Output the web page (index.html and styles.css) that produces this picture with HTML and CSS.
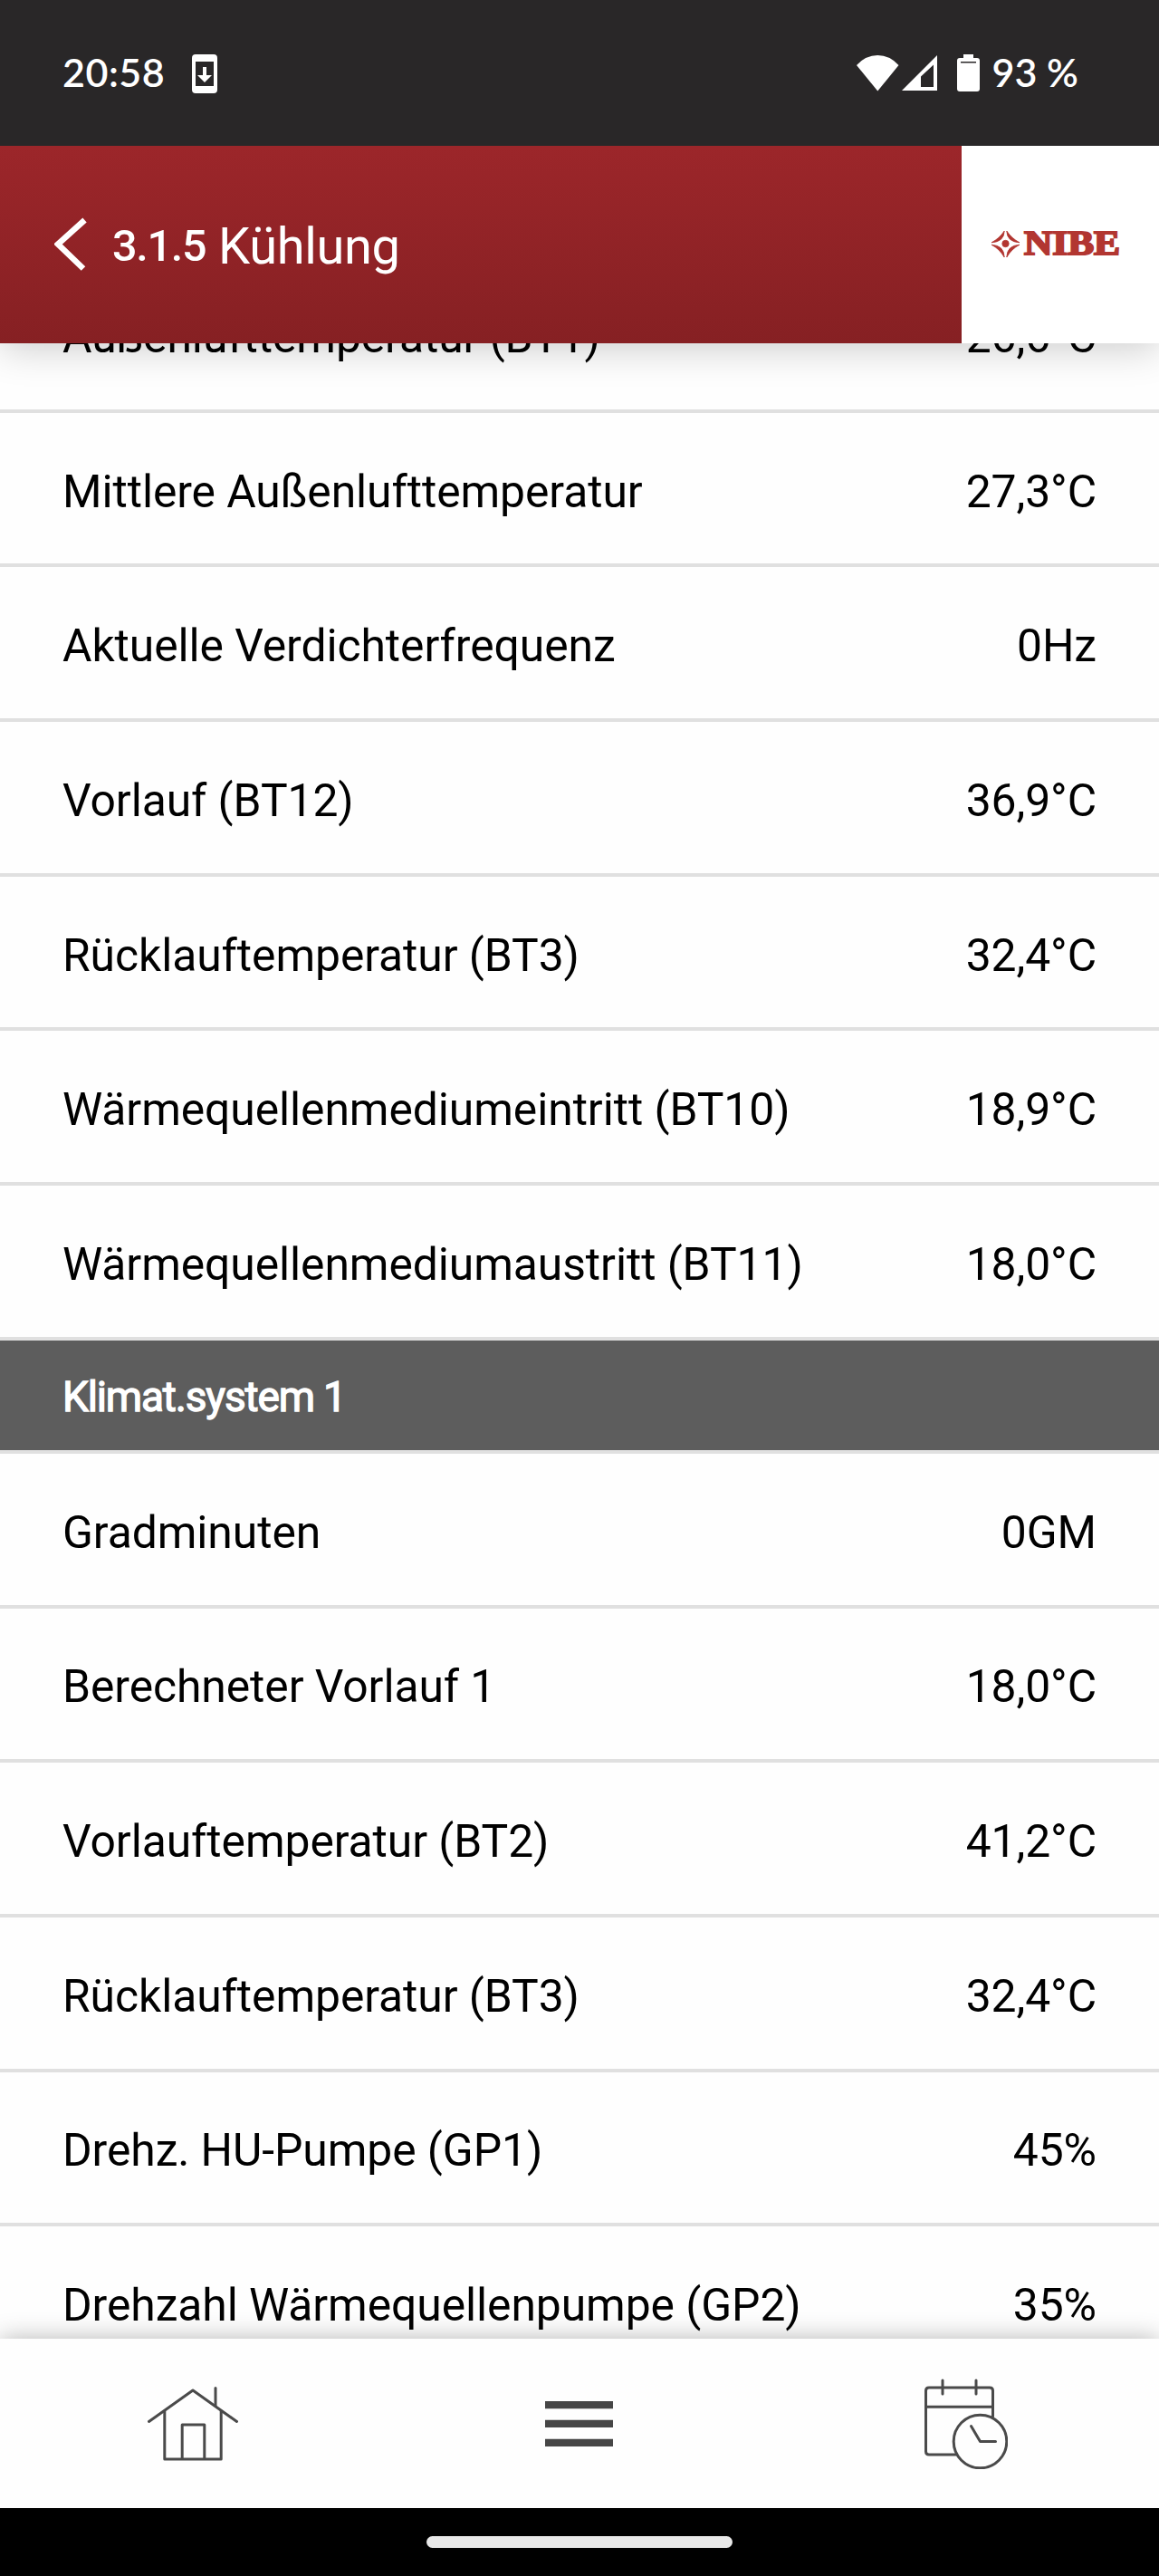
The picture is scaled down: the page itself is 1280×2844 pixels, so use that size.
FILE: index.html
```html
<!DOCTYPE html>
<html lang="de">
<head>
<meta charset="utf-8">
<title>3.1.5 Kühlung</title>
<link rel="stylesheet" href="styles.css">
</head>
<body>
<div class="screen">
  <div class="status">
    <span class="status-text clock">20:58</span>
    <svg class="update-icon" width="28" height="43" viewBox="0 0 28 43"><path fill="#fff" fill-rule="evenodd" d="M4 0H24A4 4 0 0 1 28 4V39A4 4 0 0 1 24 43H4A4 4 0 0 1 0 39V4A4 4 0 0 1 4 0ZM4 8V35H24V8Z"/><path fill="#fff" d="M12 14h4v9h6l-8 8-8-8h6z"/></svg>
    <div class="status-right">
      <svg width="47" height="40" viewBox="0 0 47 40"><path fill="#fff" d="M0 11Q10 0 23.300 0T46.500 11L23.300 39.500Z"/></svg>
      <svg class="signal" width="39" height="39" viewBox="0 0 39 39"><path fill="#fff" fill-rule="evenodd" d="M39 0V39H0ZM35 10.500L21 23.500V35H35Z"/></svg>
      <svg class="battery" width="25" height="41" viewBox="0 0 25 41"><path fill="#fff" fill-rule="evenodd" d="M7 0H18V4H22A3 3 0 0 1 25 7V38A3 3 0 0 1 22 41H3A3 3 0 0 1 0 38V7A3 3 0 0 1 3 4H7ZM4 8V9.500H21V8Z"/></svg>
      <span class="status-text">93 %</span>
    </div>
  </div>
  <header class="header">
    <div class="title-bar">
      <svg class="back" width="38" height="60" viewBox="0 0 38 60"><path fill="none" stroke="#fff" stroke-width="6.500" d="M33.500 3L4 29.500L32 56.500"/></svg>
      <span class="menu-number">3.1.5</span>
      <h1 class="title">Kühlung</h1>
    </div>
    <div class="brand">
      <svg width="144" height="32" viewBox="0 0 144 32"><g fill="#b23631" stroke="#b23631" stroke-width=".8"><circle cx="15.500" cy="15" r="3.700"/><path d="M14.200 1Q14 13 0 13.800Q8.500 9.500 14.200 1Z"/><path d="M16.800 1Q17 13 31 13.800Q22.500 9.500 16.800 1Z"/><path d="M14.200 30Q14 17 0 16.200Q8.500 20.500 14.200 30Z"/><path d="M16.800 30Q17 17 31 16.200Q22.500 20.500 16.800 30Z"/></g><text class="brand-name" x="36" y="27" textLength="106" lengthAdjust="spacingAndGlyphs">NIBE</text></svg>
    </div>
  </header>
  <main class="list">
    <div class="row"><span>Außenlufttemperatur (BT1)</span><span>26,6°C</span></div>
    <div class="row"><span>Mittlere Außenlufttemperatur</span><span>27,3°C</span></div>
    <div class="row"><span>Aktuelle Verdichterfrequenz</span><span>0Hz</span></div>
    <div class="row"><span>Vorlauf (BT12)</span><span>36,9°C</span></div>
    <div class="row"><span>Rücklauftemperatur (BT3)</span><span>32,4°C</span></div>
    <div class="row"><span>Wärmequellenmediumeintritt (BT10)</span><span>18,9°C</span></div>
    <div class="row"><span>Wärmequellenmediumaustritt (BT11)</span><span>18,0°C</span></div>
    <h2 class="section">Klimat.system 1</h2>
    <div class="row"><span>Gradminuten</span><span>0GM</span></div>
    <div class="row"><span>Berechneter Vorlauf 1</span><span>18,0°C</span></div>
    <div class="row"><span>Vorlauftemperatur (BT2)</span><span>41,2°C</span></div>
    <div class="row"><span>Rücklauftemperatur (BT3)</span><span>32,4°C</span></div>
    <div class="row"><span>Drehz. HU-Pumpe (GP1)</span><span>45%</span></div>
    <div class="row"><span>Drehzahl Wärmequellenpumpe (GP2)</span><span>35%</span></div>
  </main>
  <nav class="nav">
    <a class="tab"><svg width="100" height="84" viewBox="0 0 100 84"><g fill="none" stroke="#4a4a4a" stroke-width="3" stroke-linecap="round" stroke-linejoin="round"><path d="M1.500 39.500L50 5L98.500 39.500"/><path d="M18.800 28V81H81.200V28"/><path d="M38.200 80.500V43H62.800V80.500"/><path d="M75 2.500V22"/></g></svg></a>
    <a class="tab"><svg width="75" height="50" viewBox="0 0 75 50"><path fill="#464646" d="M0 0H75V8.300H0ZM0 20.800H75V29.100H0ZM0 41.700H75V50H0Z"/></svg></a>
    <a class="tab"><svg width="92" height="100" viewBox="0 0 92 100"><g fill="none" stroke="#4a4a4a" stroke-width="3" stroke-linecap="round" stroke-linejoin="round"><path d="M35 84H5Q1.500 84 1.500 80.500V13.500Q1.500 10 5 10H72Q75.500 10 75.500 13.500V42"/><path d="M1.500 31.300H75.500M20 2V17M57 2V17"/><circle cx="61.500" cy="69.500" r="29.300"/><path d="M51.500 52.500L61.500 69.500H78.500"/></g></svg></a>
  </nav>
  <div class="gesture"><div class="pill"></div></div>
</div>
</body>
</html>
```
FILE: styles.css
```css
* { box-sizing: border-box; }
body { margin: 0; }
svg { display: block; flex: none; }
.screen {
  width: 1280px;
  height: 2844px;
  overflow: hidden;
  display: flex;
  flex-direction: column;
  background: #fefefe;
  color: #000;
  font-family: Roboto, sans-serif;
}
.status {
  flex: none;
  position: relative;
  z-index: 2;
  height: 161px;
  padding: 0 89px 0 69px;
  display: flex;
  align-items: center;
  background: #292728;
  color: #fff;
}
.status-text {
  padding-bottom: 2px;
  font: 600 43px/52px Lato, sans-serif;
  white-space: nowrap;
}
.clock { width: 112px; letter-spacing: .5px; }
.update-icon { margin: 2px 0 0 31px; }
.status-right { margin-left: auto; display: flex; align-items: center; }
.signal { margin-left: 3px; }
.battery { margin: 0 14px 0 22px; }
.header {
  flex: none;
  position: relative;
  z-index: 1;
  height: 218px;
  display: flex;
  box-shadow: 0 6px 40px rgba(0, 0, 0, .2);
}
.title-bar {
  width: 1062px;
  padding-left: 60px;
  display: flex;
  align-items: flex-start;
  background: linear-gradient(#9c262a, #862023);
  color: #fff;
}
.back { margin: 79px 26px 0 0; }
.menu-number {
  width: 103px;
  font-size: 48.500px;
  font-weight: 500;
  line-height: 221px;
  letter-spacing: -1.300px;
}
.title {
  margin: 0 0 0 14px;
  font-size: 56px;
  font-weight: 400;
  line-height: 223px;
  letter-spacing: -.350px;
}
.brand { flex: 1; padding: 93px 0 0 33px; background: #fff; }
.brand-name {
  font: bold 37px "Liberation Serif", serif;
  fill: #b23631;
  stroke: #b23631;
  stroke-width: 2px;
}
.list { flex: 1; min-height: 0; overflow: hidden; }
.row {
  height: 170.670px;
  padding: 7px 69px 0;
  border-bottom: 4px solid #e0e0e0;
  display: flex;
  align-items: center;
  justify-content: space-between;
  font-size: 49.800px;
  line-height: 58px;
  letter-spacing: -.070px;
  white-space: nowrap;
}
.row:first-child { margin-top: -93.900px; }
.section {
  height: 125.300px;
  margin: 0;
  padding: 3px 69px 0;
  border-bottom: 4px solid #e0e0e0;
  background: #5d5d5d;
  color: #fff;
  font-size: 46px;
  font-weight: 400;
  line-height: 119px;
  letter-spacing: -1.150px;
  -webkit-text-stroke: 1.300px #fff;
}
.nav {
  flex: none;
  position: relative;
  z-index: 1;
  height: 187px;
  display: grid;
  grid-template-columns: repeat(3, 1fr);
  background: #fefefe;
  box-shadow: 0 0 26px rgba(0, 0, 0, .29);
}
.tab { display: flex; align-items: center; justify-content: center; }
.gesture {
  flex: none;
  position: relative;
  z-index: 2;
  height: 75px;
  padding-top: 31px;
  background: #000;
}
.pill { width: 338px; height: 13px; margin: 0 auto; border-radius: 7px; background: #e8e8e8; }
```
